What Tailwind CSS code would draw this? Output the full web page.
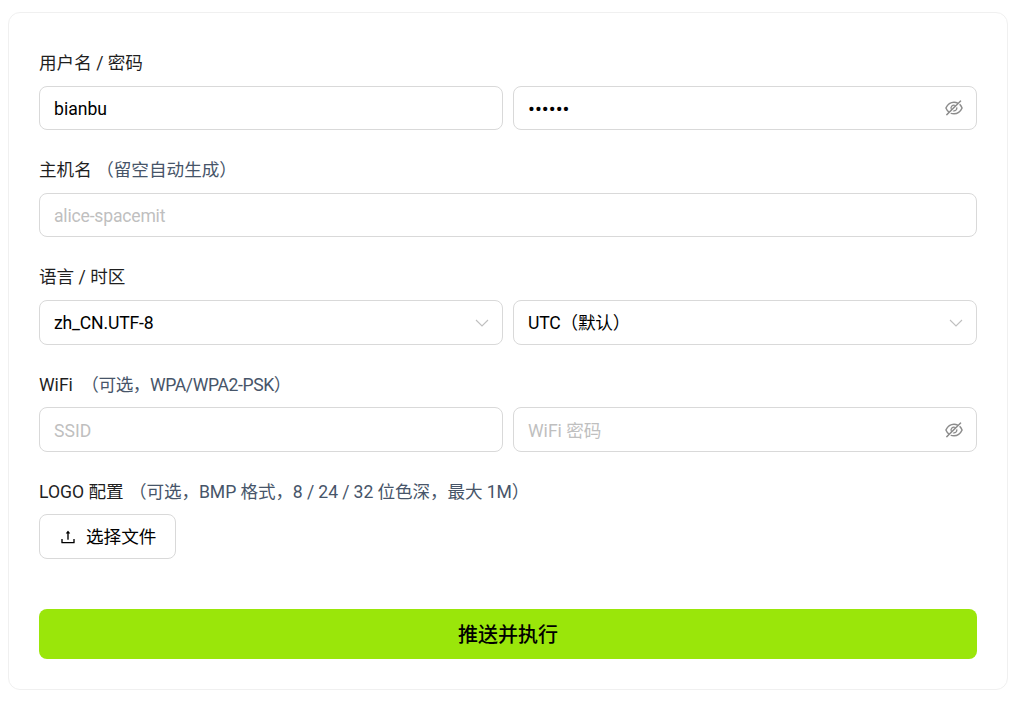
<!DOCTYPE html>
<html lang="zh-CN">
<head>
<meta charset="utf-8">
<script src="https://cdn.jsdelivr.net/npm/@tailwindcss/browser@4"></script>
</head>
<body class="bg-white font-['Roboto','Noto_Sans_CJK_SC',sans-serif] text-[17.6px] text-black">
<div class="px-2 pt-3">
  <form class="flex h-[678px] w-[1000px] flex-col rounded-xl border border-[#f0f0f0] bg-white px-[30px] pt-[37px]">
    <div class="mb-3 h-6 leading-[26px] text-[#1f1f1f]">用户名 / 密码</div>
    <div class="mb-[27px] grid grid-cols-2 gap-2.5">
      <div class="flex h-11 items-center rounded-lg border border-[#d9d9d9] px-[14px]"><span class="pt-[2px]">bianbu</span></div>
      <div class="flex h-11 items-center justify-between rounded-lg border border-[#d9d9d9] pl-[14px] pr-[13px]">
        <span class="pt-[2px] text-[20.5px]">••••••</span>
        <svg class="size-[18px] text-[#8c8c8c]" viewBox="64 64 896 896" fill="currentColor"><path d="M942.2 486.2Q889.47 375.11 816.7 305l-50.88 50.88C807.31 395.53 843.45 447.4 874.7 512 791.5 684.2 673.4 766 512 766q-72.67 0-133.87-22.38L323 798.75Q408 838 512 838q288.3 0 430.2-300.3a60.29 60.29 0 000-51.5zm-63.57-320.64L836 122.88a8 8 0 00-11.32 0L715.31 232.2Q624.86 186 512 186q-288.3 0-430.2 300.3a60.3 60.3 0 000 51.5q56.69 119.4 136.5 191.41L112.48 835a8 8 0 000 11.31L155.17 889a8 8 0 0011.31 0l712.15-712.12a8 8 0 000-11.32zM149.3 512C232.6 339.8 350.7 258 512 258c54.54 0 104.13 9.36 149.12 28.39l-70.3 70.3a176 176 0 00-238.13 238.13l-83.42 83.42C223.1 637.49 183.3 582.28 149.3 512zm246.7 0a112.11 112.11 0 01146.2-106.69L401.31 546.2A112 112 0 01396 512z"/><path d="M508 624c-3.46 0-6.87-.16-10.25-.47l-52.82 52.82a176.09 176.09 0 00227.42-227.42l-52.82 52.82c.31 3.38.47 6.79.47 10.25a111.94 111.94 0 01-112 112z"/></svg>
      </div>
    </div>

    <div class="mb-3 h-6 leading-[26px] text-[#1f1f1f]">主机名 <span class="text-[#475569]">（留空自动生成）</span></div>
    <div class="mb-[27px] flex h-11 items-center rounded-lg border border-[#d9d9d9] px-[14px] text-[#bfbfbf]"><span class="pt-[2px] tracking-[-0.2px]">alice-spacemit</span></div>

    <div class="mb-3 h-6 leading-[26px] text-[#1f1f1f]">语言 / 时区</div>
    <div class="mb-[26px] grid grid-cols-2 gap-2.5">
      <div class="flex h-[45px] items-center justify-between rounded-lg border border-[#d9d9d9] pl-[14px] pr-[13px]"><span class="pt-[2px] tracking-[-0.18px]">zh_CN.UTF-8</span>
        <svg class="h-[8px] w-[14px] text-[#bfbfbf]" viewBox="0 0 14 8" fill="none" stroke="currentColor" stroke-width="1.1"><path d="M1 1l6 6 6-6"/></svg>
      </div>
      <div class="flex h-[45px] items-center justify-between rounded-lg border border-[#d9d9d9] pl-[14px] pr-[13px]"><span class="pt-[2px] tracking-[-0.2px]">UTC（默认）</span>
        <svg class="h-[8px] w-[14px] text-[#bfbfbf]" viewBox="0 0 14 8" fill="none" stroke="currentColor" stroke-width="1.1"><path d="M1 1l6 6 6-6"/></svg>
      </div>
    </div>

    <div class="mb-3 h-6 leading-[28px] text-[#1f1f1f]">WiFi <span class="ml-1 tracking-[-0.4px] text-[#475569]">（可选，WPA/WPA2-PSK）</span></div>
    <div class="mb-[26px] grid grid-cols-2 gap-2.5">
      <div class="flex h-[45px] items-center rounded-lg border border-[#d9d9d9] px-[14px] text-[#bfbfbf]"><span class="pt-[4px]">SSID</span></div>
      <div class="flex h-[45px] items-center justify-between rounded-lg border border-[#d9d9d9] pl-[14px] pr-[13px] text-[#bfbfbf]">
        <span class="pt-[4px]">WiFi 密码</span>
        <svg class="size-[18px] text-[#8c8c8c]" viewBox="64 64 896 896" fill="currentColor"><path d="M942.2 486.2Q889.47 375.11 816.7 305l-50.88 50.88C807.31 395.53 843.45 447.4 874.7 512 791.5 684.2 673.4 766 512 766q-72.67 0-133.87-22.38L323 798.75Q408 838 512 838q288.3 0 430.2-300.3a60.29 60.29 0 000-51.5zm-63.57-320.64L836 122.88a8 8 0 00-11.32 0L715.31 232.2Q624.86 186 512 186q-288.3 0-430.2 300.3a60.3 60.3 0 000 51.5q56.69 119.4 136.5 191.41L112.48 835a8 8 0 000 11.31L155.17 889a8 8 0 0011.31 0l712.15-712.12a8 8 0 000-11.32zM149.3 512C232.6 339.8 350.7 258 512 258c54.54 0 104.13 9.36 149.12 28.39l-70.3 70.3a176 176 0 00-238.13 238.13l-83.42 83.42C223.1 637.49 183.3 582.28 149.3 512zm246.7 0a112.11 112.11 0 01146.2-106.69L401.31 546.2A112 112 0 01396 512z"/><path d="M508 624c-3.46 0-6.87-.16-10.25-.47l-52.82 52.82a176.09 176.09 0 00227.42-227.42l-52.82 52.82c.31 3.38.47 6.79.47 10.25a111.94 111.94 0 01-112 112z"/></svg>
      </div>
    </div>

    <div class="mb-3 h-6 leading-[28px] text-[#1f1f1f]">LOGO 配置 <span class="ml-px tracking-[-0.1px] text-[#475569]">（可选，BMP 格式，8 / 24 / 32 位色深，最大 1M）</span></div>
    <div class="flex h-[45px] w-[137px] items-center gap-2.5 rounded-lg border border-[#d9d9d9] pl-5">
      <svg class="size-4" viewBox="64 64 896 896" fill="currentColor"><path d="M400 317.7h73.9V656c0 4.4 3.6 8 8 8h60c4.4 0 8-3.6 8-8V317.7H624c6.7 0 10.4-7.7 6.3-12.9L518.3 163a8 8 0 00-12.6 0l-112 141.7c-4.1 5.3-.4 13 6.3 13zM878 626h-60c-4.4 0-8 3.6-8 8v154H214V634c0-4.4-3.6-8-8-8h-60c-4.4 0-8 3.6-8 8v198c0 17.7 14.3 32 32 32h684c17.7 0 32-14.3 32-32V634c0-4.4-3.6-8-8-8z"/></svg>
      <span class="pt-[2px]">选择文件</span>
    </div>

    <div class="mt-[50px] flex h-[50px] items-center justify-center rounded-lg bg-[#9ae60a] text-[20px] font-medium"><span class="pt-[2px]">推送并执行</span></div>
  </form>
</div>
</body>
</html>
